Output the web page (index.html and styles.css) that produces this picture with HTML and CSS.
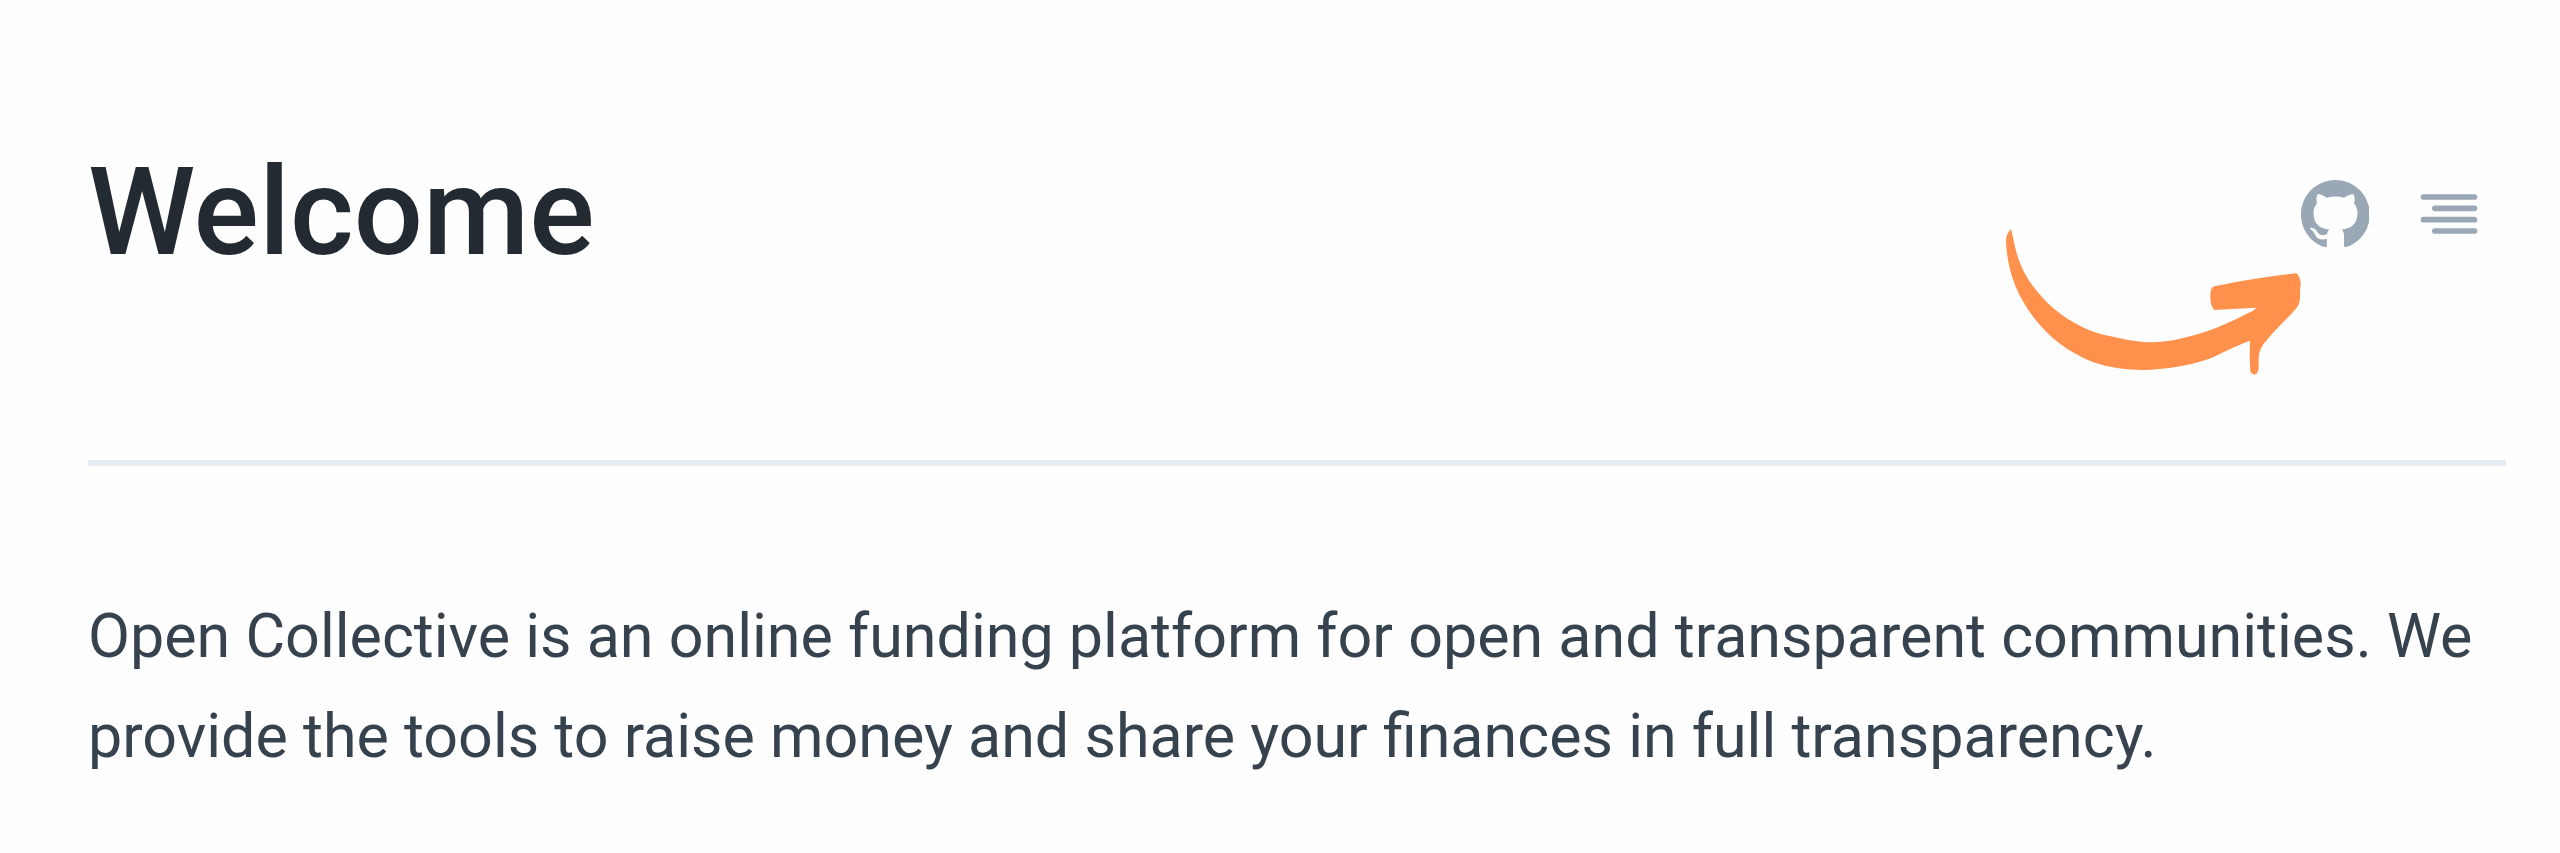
FILE: index.html
```html
<!DOCTYPE html>
<html lang="en">
<head>
  <meta charset="utf-8">
  <meta name="viewport" content="width=device-width, initial-scale=1">
  <title>Welcome</title>
  <link rel="stylesheet" href="styles.css">
</head>
<body>
  <main class="page">
    <header class="page-header">
      <h1 class="page-title">Welcome</h1>
      <div class="page-actions">
        <a class="action" href="#github" aria-label="Edit on GitHub">
          <svg class="icon" viewBox="0 0 15.8 15.8" fill="currentColor" aria-hidden="true">
            <path fill-rule="evenodd" d="M8 0C3.58 0 0 3.58 0 8c0 3.54 2.29 6.53 5.47 7.59.4.07.55-.17.55-.38 0-.19-.01-.82-.01-1.49-2.01.37-2.53-.49-2.69-.94-.09-.23-.48-.94-.82-1.13-.28-.15-.68-.52-.01-.53.63-.01 1.08.58 1.23.82.72 1.21 1.87.87 2.33.66.07-.52.28-.87.51-1.07-1.78-.2-3.64-.89-3.64-3.95 0-.87.31-1.59.82-2.15-.08-.2-.36-1.02.08-2.12 0 0 .67-.21 2.2.82.64-.18 1.32-.27 2-.27.68 0 1.36.09 2 .27 1.53-1.04 2.2-.82 2.2-.82.44 1.1.16 1.92.08 2.12.51.56.82 1.27.82 2.15 0 3.07-1.87 3.75-3.65 3.95.29.25.54.73.54 1.48 0 1.07-.01 1.93-.01 2.2 0 .21.15.46.55.38A8.013 8.013 0 0 0 16 8c0-4.42-3.58-8-8-8z"/>
          </svg>
        </a>
        <button class="action" type="button" aria-label="Table of contents">
          <svg class="icon" viewBox="0 0 24 24" fill="none" stroke="currentColor" stroke-width="2" stroke-linecap="round" aria-hidden="true">
            <path d="M3 6h18M7 10h14M3 14h18M7 18h14"/>
          </svg>
        </button>
        <svg class="arrow" viewBox="78 206 885 438" fill="currentColor" aria-hidden="true">
          <path d="M93 206C82 218 77 229 78 246C83 330 106 397 160 470C205 530 268 578 340 606C394 624 440 629 490 629C550 628 625 617 684 597C724 580 760 559 810 541L809 590L811 632C815 644 826 645 831 638C837 631 836 620 836 600C836 570 846 556 861 538C887 507 922 475 948 445C960 430 961 417 960 390C964 370 963 354 950 339C880 346 790 360 703 378C692 382 692 393 691 411C692 431 695 440 703 449L828 442C824 449 815 454 800 460C750 486 700 507 655 521C612 534 560 545 517 546C465 546 415 532 373 524C310 508 250 474 200 425C160 385 127 338 112 285C103 253 99 228 93 206Z"/>
        </svg>
      </div>
    </header>
    <p class="intro">Open Collective is an online funding platform for open and transparent communities. We provide the tools to raise money and share your finances in full transparency.</p>
  </main>
</body>
</html>
```

FILE: styles.css
```css
* {
  box-sizing: border-box;
}

body {
  margin: 0;
  background: #fefefe;
  color: #36424d;
  font-family: Roboto, "Liberation Sans", sans-serif;
}

.page {
  padding: 137px 54px 0 88px;
}

.page-header {
  display: flex;
  align-items: flex-start;
  justify-content: space-between;
  padding-bottom: 171px;
  border-bottom: 6px solid #e5ebf1;
}

.page-title {
  margin: 0;
  color: #232a32;
  font-size: 122px;
  font-weight: 500;
  line-height: 152px;
}

.page-actions {
  position: relative;
  display: flex;
  gap: 46px;
  padding: 43px 23px 0 0;
}

.action {
  display: block;
  padding: 0;
  border: 0;
  background: none;
  color: #9aa8b5;
  cursor: pointer;
}

.icon {
  display: block;
  width: 68px;
  height: 68px;
}

.arrow {
  position: absolute;
  top: 92px;
  right: 205px;
  width: 295px;
  height: 146px;
  color: #ff914d;
}

.intro {
  margin: 120px 0 0;
  font-size: 61px;
  line-height: 100px;
}
```
